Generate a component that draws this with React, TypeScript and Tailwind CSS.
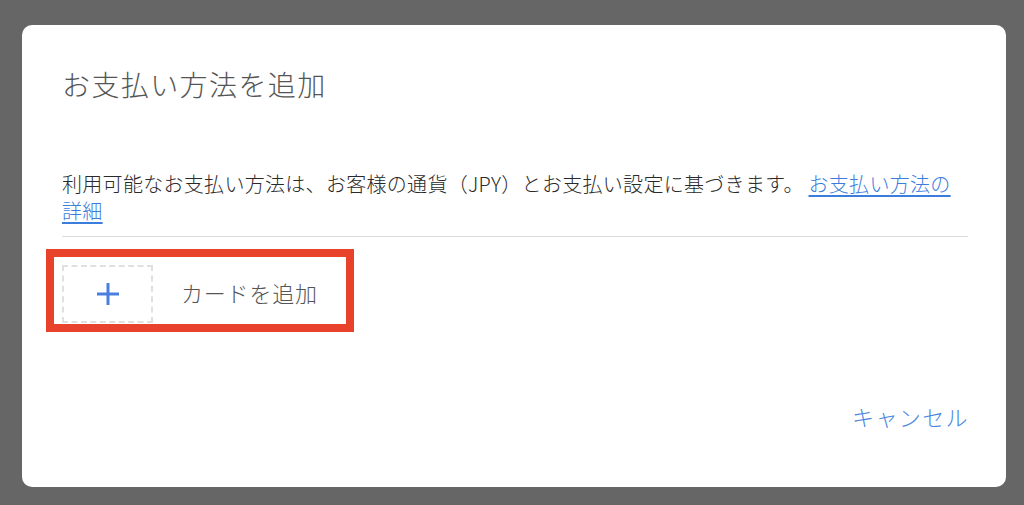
import React from "react";

export default function App() {
  return (
    <div
      className="w-[1024px] h-[505px] bg-[#666666] pt-[25px] pl-[22px] pr-[18px]"
      style={{ fontFamily: '"Noto Sans CJK JP", "Noto Sans", sans-serif' }}
    >
      <div className="relative w-[984px] h-[462px] bg-white rounded-[10px] pl-[40px] pr-[38px] pt-[41px] flex flex-col">
        <h1 className="text-[28px] leading-[36px] tracking-[1.4px] text-[#555555] font-light">お支払い方法を追加</h1>
        <p className="mt-[68px] pr-[10px] text-[20px] leading-[27px] tracking-[0.3px] text-[#2a2a2a] font-light">
          利用可能なお支払い方法は、お客様の通貨（JPY）とお支払い設定に基づきます。{" "}
          <a href="#" className="text-[#3b7ddd] underline underline-offset-[3px]">
            お支払い方法の詳細
          </a>
        </p>
        <div className="mt-[12px] h-px bg-[#dadce0]" />
        <div className="mt-[28px] flex items-center">
          <div className="w-[91px] h-[58px] border-2 border-dashed border-[#e0e0e0] flex items-center justify-center">
            <svg width="24" height="24" viewBox="0 0 24 24">
              <path d="M12 1v22M1 12h22" stroke="#4a7fe0" strokeWidth="3" fill="none" />
            </svg>
          </div>
          <span className="ml-[28px] pb-[5px] text-[22px] leading-[30px] tracking-[0.8px] text-[#555555] font-light">カードを追加</span>
        </div>
        <div className="mt-[78px] flex justify-end">
          <button className="text-[22px] leading-[30px] tracking-[1.4px] -mr-[1px] text-[#4a86e0] font-light">キャンセル</button>
        </div>
        <div className="absolute left-[24px] top-[224px] w-[308px] h-[83px] border-[8px] border-[#e8412c]" />
      </div>
    </div>
  );
}
